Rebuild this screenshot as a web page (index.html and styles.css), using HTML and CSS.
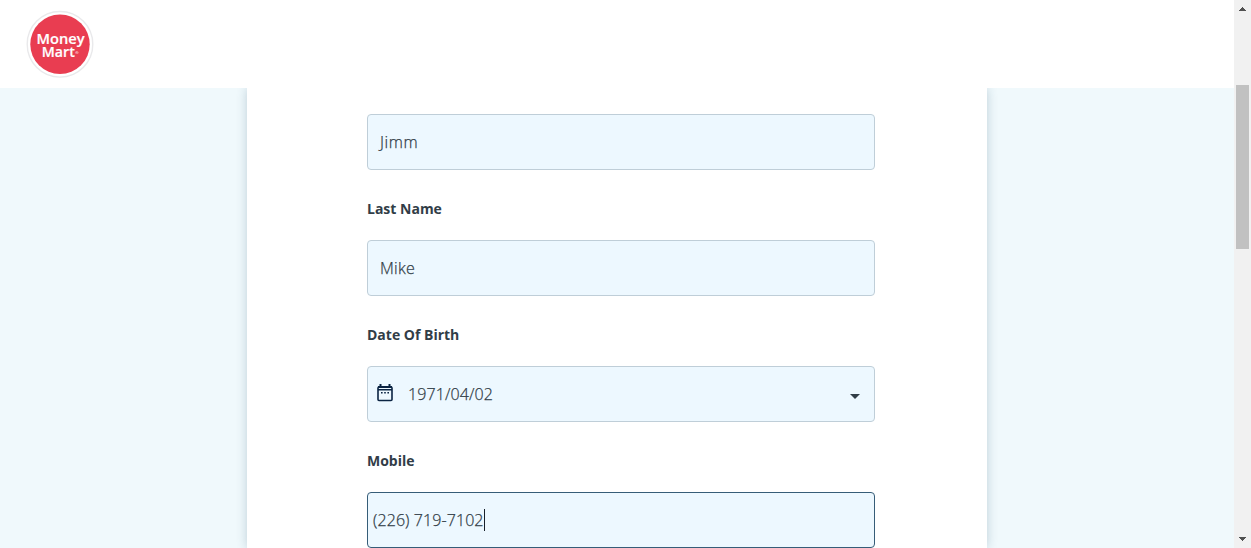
FILE: index.html
```html
<!DOCTYPE html>
<html lang="en">
<head>
<meta charset="utf-8">
<title>Money Mart</title>
<link rel="stylesheet" href="styles.css">
</head>
<body>
<div class="viewport">
  <div class="page">
    <header class="header">
      <svg class="logo" width="68" height="68" viewBox="0 0 68 68" role="img" aria-label="Money Mart">
        <circle cx="34" cy="34.300" r="32.8" fill="#fff" stroke="#e9e9eb" stroke-width="1.4"/>
        <circle cx="34" cy="34.300" r="29.700" fill="#e93d51"/>
        <text class="logo-text" x="34.500" y="34.200" textLength="48" lengthAdjust="spacingAndGlyphs">Money</text>
        <text class="logo-text" x="32.300" y="46.900" textLength="33" lengthAdjust="spacingAndGlyphs">Mart</text>
        <text class="logo-mark" x="51" y="43.500">®</text>
      </svg>
    </header>
    <main class="content">
      <form class="card">
        <div class="field">
          <div class="control"><span class="first-name">Jimm</span></div>
        </div>
        <div class="field">
          <div class="label">Last Name</div>
          <div class="control"><span class="last-name">Mike</span></div>
        </div>
        <div class="field">
          <div class="label">Date Of Birth</div>
          <div class="control control-date">
            <svg class="calendar" width="16" height="18" viewBox="0 0 16 18">
              <path d="M2 3h12a1 1 0 0 1 1 1v11.500a1 1 0 0 1-1 1H2a1 1 0 0 1-1-1V4a1 1 0 0 1 1-1z" fill="none" stroke="#0b2443" stroke-width="1.600"/>
              <path d="M1 2h14v2H1zM2.500 0h2v3h-2zM11.500 0h2v3h-2zM1 5h14v1.500H1zM4 8h1.600v1.600H4zM7.200 8h1.600v1.600H7.200zM10.400 8H12v1.600h-1.600z" fill="#0b2443"/>
            </svg>
            <span>1971/04/02</span>
            <svg class="caret" width="10" height="5" viewBox="0 0 10 5"><path d="M0 0h10L5 5z" fill="#313d47"/></svg>
          </div>
        </div>
        <div class="field">
          <div class="label">Mobile</div>
          <div class="control control-focus"><span>(226) 719-7102</span><i class="cursor"></i></div>
        </div>
      </form>
    </main>
  </div>
  <div class="scrollbar">
    <svg class="arrow" width="7" height="4" viewBox="0 0 7 4" shape-rendering="crispEdges"><path d="M3 0h1v1h1v1h1v1h1v1H0V3h1V2h1V1h1z" fill="#505050"/></svg>
    <div class="track"><div class="thumb"></div></div>
    <svg class="arrow" width="7" height="4" viewBox="0 0 7 4" shape-rendering="crispEdges"><path d="M0 0h7v1H6v1H5v1H4v1H3V3H2V2H1V1H0z" fill="#505050"/></svg>
  </div>
</div>
</body>
</html>
```
FILE: styles.css
```css
* { box-sizing: border-box; }
body { margin: 0; font-family: "Open Sans", sans-serif; color: #313d47; }
.viewport { display: flex; height: 548px; overflow: hidden; }
.page { flex: 1; display: flex; flex-direction: column; background: #f0f9fc; }
.header { height: 88px; flex: none; padding: 10px 0 0 26px; background: #fff; }
.logo { display: block; }
.logo-text { font: 600 14.500px "Open Sans", sans-serif; fill: #fff; stroke: #fff; stroke-width: .2px; text-anchor: middle; }
.logo-mark { font: 600 4px "Open Sans", sans-serif; fill: #fff; text-anchor: middle; }
.content { flex: 1; min-height: 0; overflow: hidden; padding-left: 247px; }
.card { width: 740px; height: 460px; padding: 26px 112px 0 120px; background: #fff; box-shadow: 0 0 10px rgba(28, 75, 105, .24); }
.label { height: 70px; padding-top: 29px; font-size: 14px; font-weight: 700; line-height: 20px; }
.control { display: flex; align-items: center; height: 56px; padding: 0 12px; border: 1px solid #bfced8; border-radius: 4px; background: #edf8ff; font-size: 16px; font-weight: 300; line-height: 24px; letter-spacing: .09px; -webkit-text-stroke: .25px #313d47; }
.first-name { letter-spacing: .6px; }
.last-name { letter-spacing: .3px; }
.control-date { padding: 0 14px 0 9px; }
.calendar { margin: 0 15px 3px 0; }
.caret { margin: 4px 0 0 auto; }
.control-focus { padding: 0 5px; border-color: #365d78; }
.cursor { width: 1px; height: 22px; background: #17202a; }
.scrollbar { display: flex; flex-direction: column; align-items: center; width: 17px; padding: 7px 0; background: #f1f1f1; }
.track { flex: 1; padding-top: 74px; }
.thumb { width: 13px; height: 164px; background: #c1c1c1; }
```
